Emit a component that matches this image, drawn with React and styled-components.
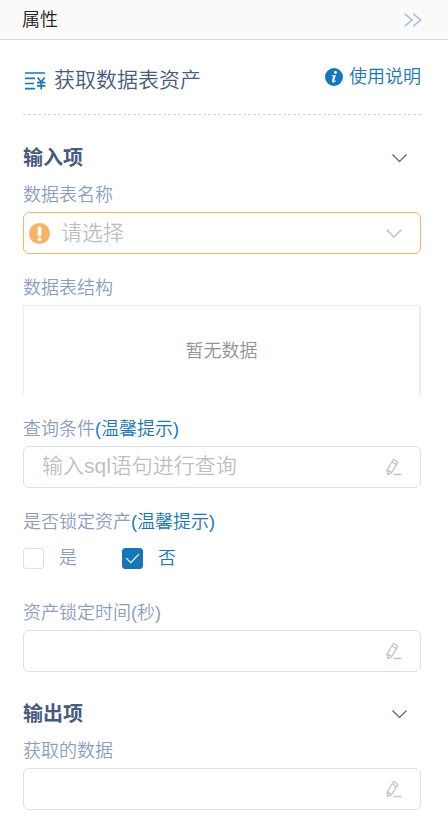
import React, { useState } from 'react';
import styled, { createGlobalStyle } from 'styled-components';

const GlobalStyle = createGlobalStyle`
  * {
    box-sizing: border-box;
  }

  body {
    margin: 0;
    background: #fff;
    font-family: "Liberation Sans", "Noto Sans CJK SC", sans-serif;
    font-size: 18px;
    font-weight: 350;
  }

  input, select, button {
    font: inherit;
  }
`;

const Header = styled.header`
  display: flex;
  align-items: center;
  justify-content: space-between;
  height: 40px;
  padding: 0 26px 0 22px;
  border-bottom: 1px solid #d8d9dc;
  background: #fafafa;
  color: #222;
`;

const HeaderTitle = styled.h1`
  margin: 0;
  font-size: 18px;
  font-weight: 350;
  line-height: 24px;
`;

const IconButton = styled.button`
  display: flex;
  padding: 0;
  border: 0;
  background: none;
  color: ${(props) => props.$color};
  cursor: pointer;
`;

const Content = styled.main`
  padding: 26px 27px 12px 23px;
`;

const TitleRow = styled.div`
  display: flex;
  align-items: flex-start;
  justify-content: space-between;
  padding-bottom: 20px;
`;

const Divider = styled.hr`
  height: 1px;
  margin: 0 0 1px;
  border: 0;
  background: repeating-linear-gradient(to right, #d5d7da 0 3px, transparent 3px 5px);
`;

const Title = styled.h2`
  display: flex;
  align-items: center;
  gap: 7px;
  margin: 0;
  color: #475a80;
  font-size: 21px;
  font-weight: 350;
  line-height: 28px;
`;

const HelpLink = styled.a`
  display: flex;
  align-items: center;
  gap: 6px;
  color: #1576bd;
  line-height: 22px;
  text-decoration: none;
`;

const SectionHead = styled.div`
  display: flex;
  align-items: center;
  justify-content: space-between;
  padding: 28px 14px 0 0;
`;

const SectionTitle = styled.h3`
  margin: 0;
  color: #475a80;
  font-size: 20px;
  font-weight: 700;
  line-height: 28px;
`;

const Fields = styled.div`
  display: flex;
  flex-direction: column;
  gap: 22px;
  padding-top: 11px;
`;

const Field = styled.div`
  display: flex;
  flex-direction: column;
  gap: 5px;
`;

const Label = styled.label`
  color: #8b9dc3;
  line-height: 24px;
`;

const Caption = styled.div`
  color: #8b9dc3;
  line-height: 24px;
`;

const TipLink = styled.a`
  color: #1576bd;
  text-decoration: none;
`;

const Control = styled.div`
  display: flex;
  align-items: center;
  gap: 11px;
  height: 42px;
  padding: 0 18px 0 ${(props) => (props.$warning ? '5px' : '18px')};
  border: 1px solid ${(props) => (props.$warning ? '#f8b266' : '#dcdfe6')};
  border-radius: 6px;
  color: #c0c4cc;

  svg {
    flex: none;
  }
`;

const TextInput = styled.input`
  flex: 1;
  min-width: 0;
  height: 38px;
  padding: 0 0 2px;
  border: 0;
  outline: none;
  background: none;
  color: #475a80;
  font-size: 21px;

  &::placeholder {
    color: #bfbfbf;
    opacity: 1;
  }
`;

const Select = styled.select`
  flex: 1;
  min-width: 0;
  height: 38px;
  padding: 0 0 2px;
  border: 0;
  outline: none;
  appearance: none;
  background: none;
  color: #bfbfbf;
  font-size: 21px;
`;

const EmptyTable = styled.div`
  display: flex;
  align-items: center;
  justify-content: center;
  height: 90px;
  border: 1px solid #ebedf2;
  border-right: 2px solid #e9ecf5;
  border-bottom: 0;
  color: #909399;
  line-height: 24px;
`;

const CheckGroup = styled.div`
  display: flex;
  gap: 45px;
  padding: 9px 0 10px;
`;

const CheckLabel = styled.label`
  display: flex;
  align-items: center;
  gap: 15px;
  height: 21px;
  color: ${(props) => (props.$checked ? '#1576bd' : '#8b9dc3')};
  line-height: 21px;
  cursor: pointer;
`;

const CheckBox = styled.span`
  display: grid;
  place-items: center;
  width: 21px;
  height: 21px;

  > * {
    grid-area: 1 / 1;
  }

  input {
    width: 21px;
    height: 21px;
    margin: 0;
    appearance: none;
    border: 1px solid #dcdfe6;
    border-radius: 3px;
    background: #fff;
  }

  input:checked {
    border-color: #1576bd;
    background: #1576bd;
  }

  svg {
    z-index: 1;
    pointer-events: none;
  }
`;

const DoubleArrow = () => (
  <svg width="18" height="14" viewBox="0 0 18 14" fill="none" stroke="currentColor" strokeWidth="1.6">
    <path d="M.8.8 8 7 .8 13.2M9.3.8 16.7 7l-7.4 6.2" />
  </svg>
);

const AssetIcon = () => (
  <svg width="24" height="24" viewBox="0 0 24 24" fill="none" stroke="#1576bd" strokeWidth="1.6">
    <path d="M2 5h20M2 10.4h10M2 15.5h9M2 20.6h10" />
    <path d="M14.7 9.5l3.5 4.5 3.5-4.5M18.2 14v7.4M14 14.6h8.4M14 17.8h8.4" strokeWidth="1.7" />
  </svg>
);

const InfoIcon = () => (
  <svg width="18" height="18" viewBox="0 0 18 18">
    <circle cx="9" cy="9" r="9" fill="#1576bd" />
    <circle cx="10.5" cy="4.4" r="1.4" fill="#fff" />
    <path d="M6.6 7.4 10.8 6.9 9.2 12.6q-.2.9.5.5l1-.8.4.4Q9.5 14.7 8 14.6 6.5 14.4 7 12.5L8.2 8.2 6.5 7.9z" fill="#fff" />
  </svg>
);

const WarningIcon = () => (
  <svg width="21" height="21" viewBox="0 0 21 21">
    <circle cx="10.5" cy="10.5" r="10.5" fill="#f8b266" />
    <path d="M10.5 5.3v6.4" stroke="#fff" strokeWidth="3.8" strokeLinecap="round" />
    <circle cx="10.5" cy="16.4" r="1.9" fill="#fff" />
  </svg>
);

const SectionArrow = () => (
  <svg width="15" height="9" viewBox="0 0 15 9" fill="none" stroke="currentColor" strokeWidth="1.1">
    <path d="M.5.5 7.5 7.5 14.5.5" />
  </svg>
);

const SelectArrow = () => (
  <svg width="16" height="9" viewBox="0 0 16 9" fill="none" stroke="currentColor" strokeWidth="1.5">
    <path d="M.6.6 8 8 15.4.6" />
  </svg>
);

const PenIcon = () => (
  <svg width="16" height="18" viewBox="0 0 16 18" fill="none" stroke="currentColor" strokeWidth="1.3" strokeLinejoin="round">
    <path d="M7.5 1.5 12 4.2 5.5 14.6 1.7 16.6 1.2 11.9zM6.2 4l4.4 2.7M1.2 11.9l4.3 2.7M7.5 16.5h8" />
  </svg>
);

const CheckIcon = () => (
  <svg width="15" height="11" viewBox="0 0 15 11" fill="none" stroke="#fff" strokeWidth="1.1">
    <path d="M1 4.8 5.8 9.6 14 1" />
  </svg>
);

function Section({ title, children }) {
  const [open, setOpen] = useState(true);
  return (
    <section>
      <SectionHead>
        <SectionTitle>{title}</SectionTitle>
        <IconButton type="button" $color="#475a80" aria-label={title} aria-expanded={open} onClick={() => setOpen(!open)}>
          <SectionArrow />
        </IconButton>
      </SectionHead>
      {open && <Fields>{children}</Fields>}
    </section>
  );
}

function TextField({ id, label, tip, placeholder }) {
  return (
    <Field>
      <Label htmlFor={id}>
        {label}
        {tip && <TipLink href="#tip">({tip})</TipLink>}
      </Label>
      <Control>
        <TextInput id={id} type="text" placeholder={placeholder} />
        <PenIcon />
      </Control>
    </Field>
  );
}

function CheckOption({ label, checked, onChange }) {
  return (
    <CheckLabel $checked={checked}>
      <CheckBox>
        <input type="checkbox" checked={checked} onChange={onChange} />
        {checked && <CheckIcon />}
      </CheckBox>
      {label}
    </CheckLabel>
  );
}

function App() {
  const [locked, setLocked] = useState(false);

  return (
    <>
      <GlobalStyle />
      <Header>
        <HeaderTitle>属性</HeaderTitle>
        <IconButton type="button" $color="#aebcdb" aria-label="收起">
          <DoubleArrow />
        </IconButton>
      </Header>
      <Content>
        <TitleRow>
          <Title>
            <AssetIcon />
            获取数据表资产
          </Title>
          <HelpLink href="#help">
            <InfoIcon />
            使用说明
          </HelpLink>
        </TitleRow>
        <Divider />

        <Section title="输入项">
          <Field>
            <Label htmlFor="table-name">数据表名称</Label>
            <Control $warning>
              <WarningIcon />
              <Select id="table-name" defaultValue="">
                <option value="">请选择</option>
              </Select>
              <SelectArrow />
            </Control>
          </Field>
          <Field>
            <Caption>数据表结构</Caption>
            <EmptyTable>暂无数据</EmptyTable>
          </Field>
          <TextField id="query" label="查询条件" tip="温馨提示" placeholder="输入sql语句进行查询" />
          <Field role="group" aria-label="是否锁定资产">
            <Caption>
              是否锁定资产<TipLink href="#tip">(温馨提示)</TipLink>
            </Caption>
            <CheckGroup>
              <CheckOption label="是" checked={locked} onChange={() => setLocked(true)} />
              <CheckOption label="否" checked={!locked} onChange={() => setLocked(false)} />
            </CheckGroup>
          </Field>
          <TextField id="lock-time" label="资产锁定时间(秒)" />
        </Section>

        <Section title="输出项">
          <TextField id="result" label="获取的数据" />
        </Section>
      </Content>
    </>
  );
}

export default App;
